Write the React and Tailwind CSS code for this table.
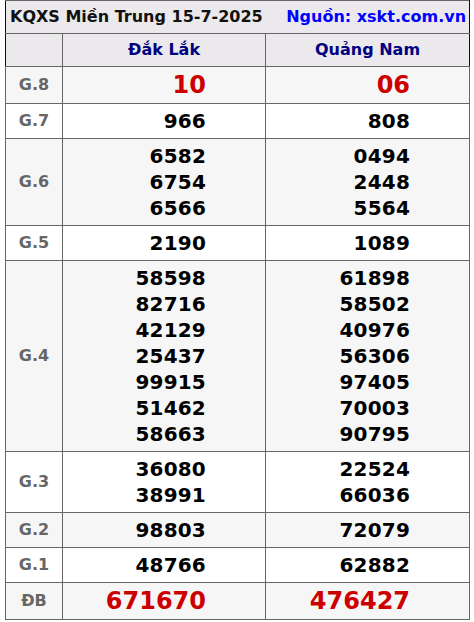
import React from 'react';

const rows = [
  { label: 'G.8', a: ['10'], b: ['06'], big: true },
  { label: 'G.7', a: ['966'], b: ['808'] },
  { label: 'G.6', a: ['6582', '6754', '6566'], b: ['0494', '2448', '5564'] },
  { label: 'G.5', a: ['2190'], b: ['1089'] },
  {
    label: 'G.4',
    a: ['58598', '82716', '42129', '25437', '99915', '51462', '58663'],
    b: ['61898', '58502', '40976', '56306', '97405', '70003', '90795'],
  },
  { label: 'G.3', a: ['36080', '38991'], b: ['22524', '66036'] },
  { label: 'G.2', a: ['98803'], b: ['72079'] },
  { label: 'G.1', a: ['48766'], b: ['62882'] },
  { label: 'ĐB', a: ['671670'], b: ['476427'], big: true },
];

function Cell({ nums, big }) {
  return (
    <td className="border border-[#666] pr-[59px] py-[4px] text-right align-middle">
      {nums.map((n) => (
        <div
          key={n}
          className={
            big
              ? 'text-[24px] leading-[28px] font-bold text-[#cc0000]'
              : 'text-[20px] leading-[26px] font-bold text-black tracking-[0.2px]'
          }
        >
          {n}
        </div>
      ))}
    </td>
  );
}

export default function App() {
  return (
    <div className="bg-white px-[5px] pb-[2px]" style={{ fontFamily: '"DejaVu Sans", sans-serif' }}>
      <table className="w-[464px] border-collapse table-fixed">
        <colgroup>
          <col className="w-[57px]" />
          <col className="w-[203px]" />
          <col className="w-[204px]" />
        </colgroup>
        <thead>
          <tr className="bg-[#ebe9eb]">
            <td colSpan={3} className="border border-[#666] border-x-[#00007a] h-[33px] py-0 pl-[4px] pr-[3px]">
              <div className="flex items-center justify-between text-[16px] leading-[20px] font-bold">
                <span className="text-[#111]">KQXS Miền Trung 15-7-2025</span>
                <span className="text-[#0000ff]">Nguồn: xskt.com.vn</span>
              </div>
            </td>
          </tr>
          <tr className="bg-[#ebe9eb]">
            <td className="border border-[#666] border-l-[#00007a] h-[33px]"></td>
            <td className="border border-[#666] text-center text-[16px] font-bold text-[#000080]">Đắk Lắk</td>
            <td className="border border-[#666] border-r-[#00007a] text-center text-[16px] font-bold text-[#000080]">Quảng Nam</td>
          </tr>
        </thead>
        <tbody>
          {rows.map((r, i) => (
            <tr key={r.label} className={i % 2 === 0 ? 'bg-[#f6f6f6]' : 'bg-white'}>
              <td className="border border-[#666] text-center text-[16px] font-bold text-[#666] align-middle">
                {r.label}
              </td>
              <Cell nums={r.a} big={r.big} />
              <Cell nums={r.b} big={r.big} />
            </tr>
          ))}
        </tbody>
      </table>
    </div>
  );
}
